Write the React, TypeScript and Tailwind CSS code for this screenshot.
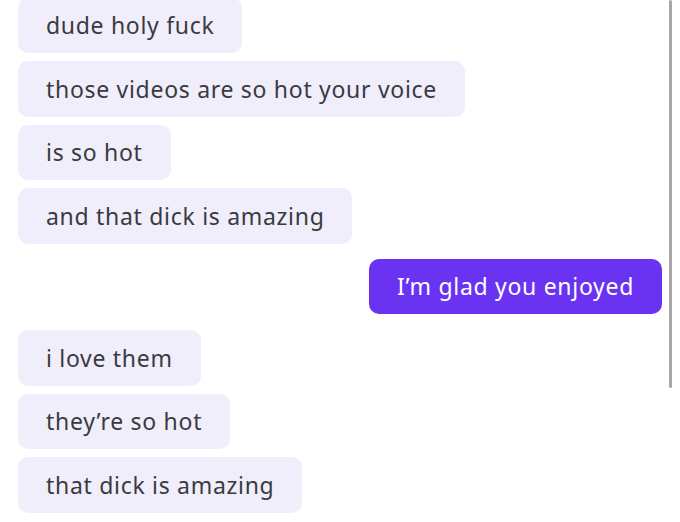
const messages = [
  { text: "dude holy fuck", mine: false },
  { text: "those videos are so hot your voice", mine: false },
  { text: "is so hot", mine: false },
  { text: "and that dick is amazing", mine: false },
  { text: "I’m glad you enjoyed", mine: true },
  { text: "i love them", mine: false },
  { text: "they’re so hot", mine: false },
  { text: "that dick is amazing", mine: false },
];

export default function App() {
  return (
    <div className="relative h-[522px] w-[680px] overflow-hidden bg-white font-['Noto_Sans',sans-serif]">
      <div className="-mt-[2.5px] flex flex-col px-[18px]">
        {messages.map((m, i) => {
          const prev = messages[i - 1];
          let gap = "mt-[8px]";
          if (i === 0) gap = "";
          else if (prev.mine !== m.mine) gap = m.mine ? "mt-[15px]" : "mt-[16px]";
          return (
            <div key={i} className={`flex ${m.mine ? "justify-end" : "justify-start"} ${gap}`}>
              <div
                className={`flex h-[55.5px] items-center rounded-[10px] px-[28px] text-[23px] tracking-[0.7px] ${
                  m.mine ? "bg-[#6a33f2] text-white" : "bg-[#f0eefa] text-[#3a3a42]"
                }`}
              >
                {m.text}
              </div>
            </div>
          );
        })}
      </div>
      <div className="absolute right-[8px] top-0 h-[388px] w-[3px] rounded-full bg-[#a8a8a8]" />
    </div>
  );
}
